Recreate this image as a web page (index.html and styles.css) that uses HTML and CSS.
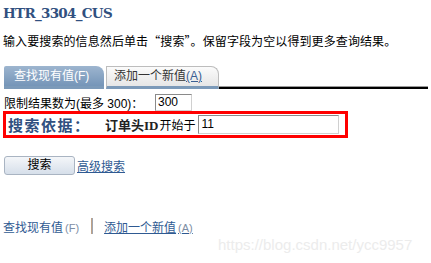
FILE: index.html
```html
<!DOCTYPE html>
<html lang="zh">
<head>
<meta charset="utf-8">
<link rel="stylesheet" href="styles.css">
</head>
<body>
<div class="page">
  <h1 class="title">HTR_3304_CUS</h1>
  <p class="desc">输入要搜索的信息然后单击“搜索”。保留字段为空以得到更多查询结果。</p>
  <div class="tabs">
    <div class="tab active">查找现有值(F)</div>
    <div class="tab inactive">添加一个新值<u class="acc">(A)</u></div>
    <div class="tab-rest"></div>
  </div>
  <div class="limit-row">
    <span class="limit-label">限制结果数为(最多 300)：</span>
    <span class="field limit-field">300</span>
  </div>
  <div class="criteria">
    <span class="crit-title">搜索依据：</span>
    <span class="crit-name">订单头ID</span>
    <span class="crit-op">开始于</span>
    <span class="field crit-field">11</span>
  </div>
  <div class="btn-row">
    <span class="btn">搜索</span>
    <a class="adv" href="#">高级搜索</a>
  </div>
  <div class="bottom-links">
    <span class="blink">查找现有值<span class="key">(F)</span></span>
    <span class="sep"></span>
    <a class="blink ul" href="#">添加一个新值<span class="key">(A)</span></a>
  </div>
</div>
<div class="watermark">https://blog.csdn.net/ycc9957</div>
</body>
</html>
```
FILE: styles.css
```css
html, body {
  margin: 0;
  padding: 0;
  background: #fff;
}
body {
  font-family: "Liberation Sans", "Noto Sans CJK SC", sans-serif;
  font-size: 12px;
  color: #000;
  width: 431px;
  height: 263px;
  overflow: hidden;
  position: relative;
}
.page {
  padding: 0 3px 0 3px;
}
.title {
  margin: 0;
  padding-top: 4px;
  font-family: "DejaVu Serif", "Liberation Serif", serif;
  font-weight: bold;
  font-size: 13.5px;
  line-height: 18px;
  color: #30507f;
  letter-spacing: -0.7px;
}
.desc {
  margin: 12px 0 0 0;
  line-height: 14px;
  font-family: "Noto Sans CJK SC", sans-serif;
  font-size: 12px;
  letter-spacing: 0.1px;
}
.tabs {
  display: flex;
  align-items: flex-end;
  margin-top: 18px;
  height: 23px;
  padding-left: 1px;
}
.tab {
  box-sizing: border-box;
  font-size: 12px;
  border-radius: 0 8px 0 0;
  border-bottom: 3px solid #7c9ab9;
  height: 23px;
  line-height: 20px;
}
.tab.active {
  width: 100px;
  background: linear-gradient(#9db5cf, #7595b8);
  color: #fff;
  padding-left: 10px;
  border-top-left-radius: 2px;
}
.tab.inactive {
  width: 113px;
  margin-left: 2px;
  background: linear-gradient(#fbfbfb, #e6e6e6);
  border-top: 1px solid #bdbdbd;
  border-right: 1px solid #bdbdbd;
  border-left: 1px solid #bdbdbd;
  color: #333;
  padding-left: 7px;
  line-height: 18px;
}
.acc {
  color: #3a5f93;
}
.tab-rest {
  flex: 1;
  height: 3px;
  box-sizing: border-box;
  border-top: 1px solid #9a9a9a;
  border-bottom: 2px solid #000;
}
.limit-row {
  display: flex;
  align-items: center;
  margin-top: 5px;
  height: 17px;
  padding-left: 1px;
}
.limit-label {
  width: 151px;
}
.field {
  display: inline-block;
  box-sizing: border-box;
  border: 1px solid #aaa;
  border-top-color: #8a8a8a;
  border-left-color: #8a8a8a;
  border-right-color: #d0d0d0;
  border-bottom-color: #d0d0d0;
  background: #fff;
  font-size: 12px;
  line-height: 15px;
  padding-left: 2px;
}
.limit-field {
  width: 37px;
  height: 17px;
}
.criteria {
  display: flex;
  align-items: center;
  box-sizing: border-box;
  width: 345px;
  height: 27px;
  border: 3px solid #f00;
  padding-left: 2px;
}
.crit-title {
  font-weight: bold;
  font-size: 15px;
  color: #30507f;
  letter-spacing: 1.5px;
  width: 97px;
}
.crit-name {
  font-family: "Liberation Serif", "Noto Sans CJK SC", serif;
  font-weight: bold;
  font-size: 13px;
  color: #222;
}
.crit-op {
  font-size: 12px;
  margin-left: 1px;
}
.crit-field {
  width: 141px;
  height: 19px;
  margin-left: 3px;
  line-height: 17px;
}
.btn-row {
  display: flex;
  align-items: center;
  margin-top: 18px;
  padding-left: 1px;
}
.btn {
  box-sizing: border-box;
  width: 71px;
  height: 19px;
  border: 1px solid #a9b4c2;
  border-radius: 3px;
  background: linear-gradient(#f4f6f9, #d6dfea);
  text-align: center;
  line-height: 17px;
  font-size: 12px;
}
.adv {
  margin-left: 2px;
  color: #2f5a92;
  font-size: 12px;
  text-decoration: underline;
}
.bottom-links {
  display: flex;
  align-items: center;
  margin-top: 43px;
  height: 16px;
}
.blink {
  color: #2f5a92;
  font-size: 12px;
  text-decoration: none;
}
.blink.ul {
  text-decoration: underline;
}
.key {
  color: #7d8ea5;
  font-family: "Liberation Sans", sans-serif;
  font-size: 11px;
  margin-left: 2px;
}
.sep {
  width: 2px;
  height: 16px;
  background: linear-gradient(90deg, #d0a070, #8fa8c8);
  margin: 0 11px 0 12px;
}
.watermark {
  position: absolute;
  left: 218px;
  top: 236px;
  font-family: "Liberation Sans", sans-serif;
  font-size: 15px;
  color: #ececec;
  white-space: nowrap;
}
```
